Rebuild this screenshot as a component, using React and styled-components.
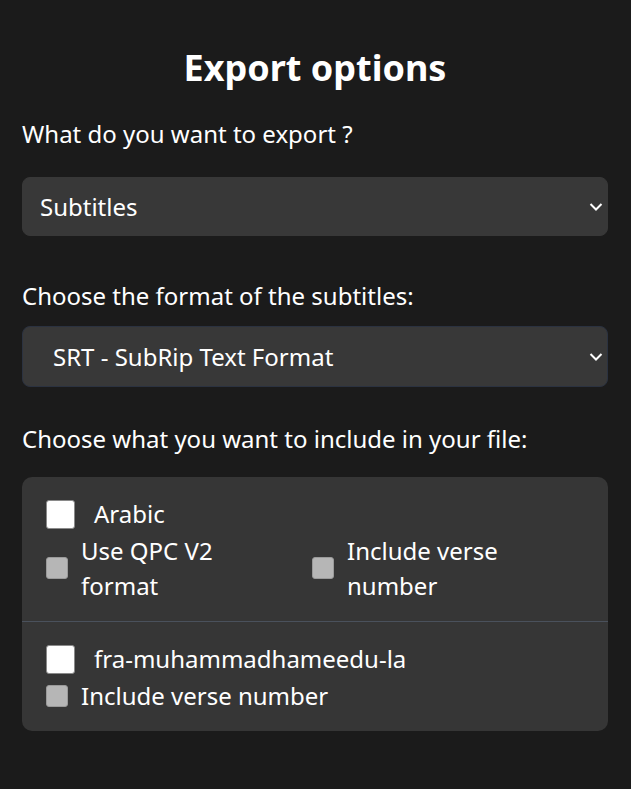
import React from "react";
import styled, { createGlobalStyle } from "styled-components";

const GlobalStyle = createGlobalStyle`
  html, body {
    margin: 0;
    background: #1b1b1b;
    color: #ffffff;
    font-family: "Noto Sans", "Open Sans", sans-serif;
  }
`;

const Page = styled.div`
  padding: 47px 23px 40px 22px;
`;

const Title = styled.h1`
  margin: 0;
  font-size: 36px;
  line-height: 42px;
  font-weight: 700;
  text-align: center;
`;

const Label = styled.div`
  font-size: 24px;
  line-height: 32px;
  margin-top: ${(p) => p.$top}px;
  margin-bottom: ${(p) => p.$bottom}px;
`;

const SelectWrap = styled.div`
  position: relative;
`;

const Select = styled.select`
  appearance: none;
  width: 100%;
  height: ${(p) => p.$height}px;
  box-sizing: border-box;
  background: #383838;
  color: #ffffff;
  border: 1px solid ${(p) => (p.$outlined ? "#2b3240" : "#383838")};
  border-radius: 8px;
  padding: 0 40px 0 ${(p) => p.$indent}px;
  font-family: inherit;
  font-size: 24px;
  outline: none;
`;

const Chevron = styled.svg`
  position: absolute;
  right: 5px;
  top: 50%;
  margin-top: -4px;
  pointer-events: none;
`;

const Card = styled.div`
  margin-top: 22px;
  background: #363636;
  border-radius: 10px;
  overflow: hidden;
`;

const Section = styled.div`
  padding: 22px 24px 18px;
  border-top: ${(p) => (p.$divided ? "1px solid #4a515c" : "none")};
`;

const MainRow = styled.label`
  display: flex;
  align-items: center;
  gap: 19px;
  font-size: 24px;
  line-height: 30px;
`;

const BigBox = styled.span`
  width: 29px;
  height: 29px;
  box-sizing: border-box;
  background: #ffffff;
  border: 1px solid #8a8a8a;
  border-radius: 3px;
  flex-shrink: 0;
`;

const Options = styled.div`
  display: grid;
  grid-template-columns: ${(p) => (p.$cols === 2 ? "266px 1fr" : "1fr")};
  margin-top: ${(p) => p.$top}px;
`;

const Option = styled.label`
  display: flex;
  align-items: center;
  gap: 13px;
  font-size: 24px;
  line-height: 35px;
`;

const SmallBox = styled.span`
  width: 22px;
  height: 22px;
  box-sizing: border-box;
  background: #b6b6b6;
  border: 1px solid #9a9a9a;
  border-radius: 3px;
  flex-shrink: 0;
`;

const OptionText = styled.span`
  max-width: 170px;
`;

function Dropdown({ value, height, indent, outlined }) {
  return (
    <SelectWrap>
      <Select
        $height={height}
        $indent={indent}
        $outlined={outlined}
        defaultValue={value}
      >
        <option>{value}</option>
      </Select>
      <Chevron width="14" height="8" viewBox="0 0 14 8">
        <path
          d="M1.5 1 L7 6.5 L12.5 1"
          fill="none"
          stroke="#ffffff"
          strokeWidth="2"
        />
      </Chevron>
    </SelectWrap>
  );
}

export default function App() {
  return (
    <Page>
      <GlobalStyle />
      <Title>Export options</Title>
      <Label $top={29} $bottom={27}>What do you want to export ?</Label>
      <Dropdown value="Subtitles" height={59} indent={17} />

      <Label $top={44} $bottom={14}>Choose the format of the subtitles:</Label>
      <Dropdown value="SRT - SubRip Text Format" height={61} indent={30} outlined />

      <Label $top={36} $bottom={0}>
        Choose what you want to include in your file:
      </Label>
      <Card>
        <Section>
          <MainRow>
            <BigBox />
            Arabic
          </MainRow>
          <Options $cols={2} $top={4}>
            <Option>
              <SmallBox />
              <OptionText>Use QPC V2 format</OptionText>
            </Option>
            <Option>
              <SmallBox />
              <OptionText>Include verse number</OptionText>
            </Option>
          </Options>
        </Section>
        <Section $divided>
          <MainRow>
            <BigBox />
            fra-muhammadhameedu-la
          </MainRow>
          <Options $cols={1} $top={4}>
            <Option>
              <SmallBox />
              <span>Include verse number</span>
            </Option>
          </Options>
        </Section>
      </Card>
    </Page>
  );
}
